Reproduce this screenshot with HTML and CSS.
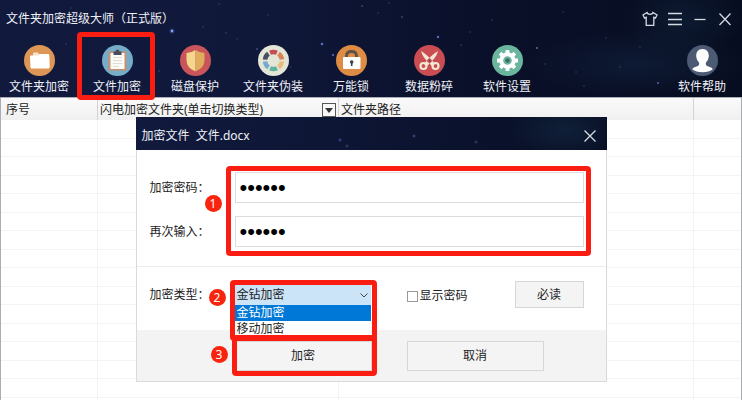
FILE: index.html
```html
<!DOCTYPE html>
<html lang="zh-CN">
  <head>
    <meta charset="utf-8">
    <meta name="viewport" content="width=device-width, initial-scale=1">
    <title>文件夹加密超级大师</title>
    <link rel="stylesheet" href="styles.css">
  </head>
  <body>
    <div class="window">
      <header class="header">
        <svg class="stars" aria-hidden="true">
          <g fill="#5b6fc0">
            <circle cx="172" cy="31" r="2.500" opacity=".4"/>
            <circle cx="172" cy="31" r="1.200" fill="#8d9cff"/>
            <circle cx="322" cy="44" r="1.300"/>
            <circle cx="333" cy="55" r="1.100"/>
            <circle cx="438" cy="37" r="1.200"/>
            <circle cx="537" cy="48" r="1"/>
            <circle cx="658" cy="83" r=".9"/>
            <circle cx="257" cy="49" r=".8"/>
            <circle cx="362" cy="6" r=".7"/>
            <circle cx="402" cy="17" r=".7"/>
          </g>
          <g fill="#384770">
            <circle cx="219" cy="4" r=".8"/>
            <circle cx="226" cy="33" r=".8"/>
            <circle cx="203" cy="27" r=".7"/>
            <circle cx="237" cy="39" r=".7"/>
            <circle cx="159" cy="71" r=".8"/>
            <circle cx="268" cy="15" r=".7"/>
            <circle cx="291" cy="67" r=".7"/>
            <circle cx="378" cy="13" r=".7"/>
            <circle cx="389" cy="3" r=".7"/>
            <circle cx="461" cy="45" r=".8"/>
            <circle cx="470" cy="32" r=".7"/>
            <circle cx="492" cy="20" r=".8"/>
            <circle cx="563" cy="12" r=".7"/>
            <circle cx="576" cy="72" r=".7"/>
            <circle cx="606" cy="38" r=".7"/>
            <circle cx="620" cy="67" r=".8"/>
            <circle cx="640" cy="47" r=".7"/>
            <circle cx="584" cy="86" r=".7"/>
            <circle cx="545" cy="64" r=".7"/>
            <circle cx="71" cy="8" r=".7"/>
            <circle cx="66" cy="44" r=".7"/>
          </g>
        </svg>

        <div class="titlebar">
          <h1 class="title">文件夹加密超级大师（正式版）</h1>
          <div class="controls">
            <button class="control" aria-label="换肤">
              <svg width="16" height="16" viewBox="0 0 16 16"><path d="M5 1.500 1 4l1.600 3.200 1.600-.8V14.300h7.600V6.400l1.600.8L15 4l-4-2.500C10.300 4 5.700 4 5 1.500z"/></svg>
            </button>
            <button class="control" aria-label="菜单">
              <svg width="16" height="16" viewBox="0 0 16 16"><path d="M1 2.500h14M1 8.500h14M1 13.500h14"/></svg>
            </button>
            <button class="control" aria-label="最小化">
              <svg width="16" height="16" viewBox="0 0 16 16"><path d="M2.500 8.500h11"/></svg>
            </button>
            <button class="control" aria-label="关闭">
              <svg width="16" height="16" viewBox="0 0 16 16"><path d="M2.500 2.500l11 11.500M13.500 2.500l-11 11.500"/></svg>
            </button>
          </div>
        </div>

        <nav class="toolbar">
          <button class="tool">
            <svg width="31" height="31" viewBox="0 0 31 31">
              <circle cx="15.500" cy="15.500" r="15.500" fill="#de9656"/>
              <path d="M9 9V8.500Q9 7.500 10 7.500h4l1 1.500h9q1.500 0 1.500 1.500V22H9z" fill="#f6e3cf"/>
              <path d="M6 11.500q0-1 1-1h7.500l1.500-1.500h8q1 0 1 1l.5 12.500q0 1-1 1h-17q-1 0-1-1z" fill="#fff"/>
            </svg>
            文件夹加密
          </button>
          <button class="tool marked">
            <svg width="31" height="31" viewBox="0 0 31 31">
              <circle cx="15.500" cy="15.500" r="15.500" fill="#76acc8"/>
              <rect x="6.500" y="6.500" width="18" height="19" rx="1.500" fill="#c98f6c"/>
              <rect x="8.500" y="8" width="14" height="16" fill="#fbfaf5"/>
              <path d="M11 12.500h9M11 15.500h9M11 18.500h9M11 21.500h6" stroke="#dcdcd8" fill="none"/>
              <path d="M11.500 6.500h2q0-2 2-2t2 2h2V10h-8z" fill="#454d5e"/>
            </svg>
            文件加密
          </button>
          <button class="tool">
            <svg width="31" height="31" viewBox="0 0 31 31">
              <circle cx="15.500" cy="15.500" r="15.500" fill="#c9555b"/>
              <path d="M15.500 5Q11 8 6.500 8v7q0 8 9 11.500z" fill="#f4d78d"/>
              <path d="M15.500 5Q20 8 24.500 8v7q0 8-9 11.500z" fill="#e0ac5d"/>
            </svg>
            磁盘保护
          </button>
          <button class="tool">
            <svg width="31" height="31" viewBox="0 0 31 31">
              <circle cx="15.500" cy="15.500" r="15.500" fill="#e3e5d6"/>
              <g fill="none" stroke-width="4.500" stroke-dasharray="7 60">
                <circle cx="15.500" cy="15.500" r="8.500" stroke="#c54d54" transform="rotate(-114 15.500 15.500)"/>
                <circle cx="15.500" cy="15.500" r="8.500" stroke="#dc8458" transform="rotate(-54 15.500 15.500)"/>
                <circle cx="15.500" cy="15.500" r="8.500" stroke="#e8bd7c" transform="rotate(6 15.500 15.500)"/>
                <circle cx="15.500" cy="15.500" r="8.500" stroke="#5fb39b" transform="rotate(66 15.500 15.500)"/>
                <circle cx="15.500" cy="15.500" r="8.500" stroke="#76a9d0" transform="rotate(126 15.500 15.500)"/>
                <circle cx="15.500" cy="15.500" r="8.500" stroke="#46505f" transform="rotate(186 15.500 15.500)"/>
              </g>
            </svg>
            文件夹伪装
          </button>
          <button class="tool">
            <svg width="31" height="31" viewBox="0 0 31 31">
              <circle cx="15.500" cy="15.500" r="15.500" fill="#de8c43"/>
              <path d="M10.500 13v-2q0-4.500 5-4.500t5 4.500v2" fill="none" stroke="#5f5048" stroke-width="2.800"/>
              <rect x="7" y="12" width="17.500" height="12" rx="1" fill="#fff"/>
              <circle cx="15.700" cy="17" r="1.800" fill="#39404e"/>
              <path d="M14.900 17h1.600v4h-1.600z" fill="#39404e"/>
            </svg>
            万能锁
          </button>
          <button class="tool">
            <svg width="31" height="31" viewBox="0 0 31 31">
              <circle cx="15.500" cy="15.500" r="15.500" fill="#c94d53"/>
              <path d="M7 6Q8.500 13 18.500 21.500l2.500-2.500Q14 10 7 6zM24 6Q22.500 13 12.500 21.500L10 19Q17 10 24 6z" fill="#f3e6d3"/>
              <g fill="none" stroke="#f3e6d3" stroke-width="2.200">
                <circle cx="9.500" cy="21" r="3"/>
                <circle cx="21.500" cy="21" r="3"/>
              </g>
              <circle cx="15.500" cy="15.800" r=".9" fill="#555"/>
            </svg>
            数据粉碎
          </button>
          <button class="tool">
            <svg width="31" height="31" viewBox="0 0 31 31">
              <circle cx="15.500" cy="15.500" r="15.500" fill="#69b59d"/>
              <circle cx="15.500" cy="15.500" r="8.200" fill="#fff"/>
              <g stroke="#fff" stroke-width="3.800">
                <path d="M15.500 5v21M5 15.500h21"/>
                <path d="M15.500 5v21M5 15.500h21" transform="rotate(45 15.500 15.500)"/>
              </g>
              <circle cx="15.500" cy="15.500" r="4.300" fill="#69b59d"/>
              <circle cx="15.500" cy="15.500" r="2.200" fill="#3e6a68"/>
            </svg>
            软件设置
          </button>
          <button class="tool help">
            <svg width="31" height="31" viewBox="0 0 31 31">
              <circle cx="15.500" cy="15.500" r="15.500" fill="#4c5a73"/>
              <path d="M15.500 4c4.300 0 6.300 3 6.300 6.800 0 3-1.300 5.200-3 6.900 0 2.300.4 3 2.600 3.700 2 .6 3.600 1.200 4.400 2.800-2.500 2-6 3-10.300 3s-7.800-1-10.300-3c.8-1.600 2.400-2.200 4.400-2.800 2.200-.7 2.600-1.400 2.600-3.700-1.700-1.700-3-3.900-3-6.900C9.200 7 11.200 4 15.500 4z" fill="#fff"/>
            </svg>
            软件帮助
          </button>
        </nav>
      </header>

      <main class="content">
        <table class="files">
          <colgroup>
            <col class="col-number">
            <col class="col-type">
            <col>
            <col class="col-end">
          </colgroup>
          <thead>
            <tr>
              <th>序号</th>
              <th>
                <div class="type-head">
                  闪电加密文件夹(单击切换类型)
                  <button class="type-toggle" aria-label="切换类型">
                    <svg width="8" height="5" viewBox="0 0 8 5"><path d="M0 0h8L4 5z"/></svg>
                  </button>
                </div>
              </th>
              <th>文件夹路径</th>
              <th></th>
            </tr>
          </thead>
          <tbody>
            <tr><td></td><td></td><td></td><td></td></tr>
            <tr><td></td><td></td><td></td><td></td></tr>
            <tr><td></td><td></td><td></td><td></td></tr>
            <tr><td></td><td></td><td></td><td></td></tr>
            <tr><td></td><td></td><td></td><td></td></tr>
            <tr><td></td><td></td><td></td><td></td></tr>
            <tr><td></td><td></td><td></td><td></td></tr>
            <tr><td></td><td></td><td></td><td></td></tr>
            <tr><td></td><td></td><td></td><td></td></tr>
            <tr><td></td><td></td><td></td><td></td></tr>
            <tr><td></td><td></td><td></td><td></td></tr>
            <tr><td></td><td></td><td></td><td></td></tr>
            <tr><td></td><td></td><td></td><td></td></tr>
            <tr><td></td><td></td><td></td><td></td></tr>
            <tr><td></td><td></td><td></td><td></td></tr>
            <tr><td></td><td></td><td></td><td></td></tr>
          </tbody>
        </table>

        <form class="dialog" role="dialog" aria-labelledby="dialog-title">
          <div class="dialog-head">
            <h2 class="title" id="dialog-title">加密文件&nbsp; 文件.docx</h2>
            <button type="button" class="control" aria-label="关闭">
              <svg width="16" height="16" viewBox="0 0 16 16"><path d="M2.500 2.500l11 11M13.500 2.500l-11 11"/></svg>
            </button>
          </div>

          <div class="passwords">
            <div class="labels">
              <label for="password">加密密码：</label>
              <label for="repeat">再次输入：</label>
            </div>
            <div class="fields marked">
              <input class="field" type="password" id="password" value="123456">
              <input class="field" type="password" id="repeat" value="123456">
              <span class="badge">1</span>
            </div>
          </div>

          <div class="options">
            <label class="option-label" for="type">加密类型：</label>
            <div class="picker marked">
              <select class="select" id="type">
                <option selected>金钻加密</option>
                <option>移动加密</option>
              </select>
              <svg class="arrow" width="8" height="5" viewBox="0 0 8 5"><path d="M.5.5 4 4 7.500.5"/></svg>
              <ul class="list">
                <li class="item active">金钻加密</li>
                <li class="item">移动加密</li>
              </ul>
              <span class="badge">2</span>
            </div>
            <div class="show">
              <input class="check" type="checkbox" id="show">
              <label for="show">显示密码</label>
            </div>
            <button type="button" class="button small">必读</button>
          </div>

          <div class="dialog-foot">
            <div class="submit marked">
              <button type="button" class="button">加密</button>
              <span class="badge">3</span>
            </div>
            <button type="button" class="button">取消</button>
          </div>
        </form>
      </main>
    </div>
  </body>
</html>
```

FILE: styles.css
```css
* {
  box-sizing: border-box;
}

body {
  margin: 0;
  overflow: hidden;
}

body,
button,
input,
select {
  font-family: "Noto Sans", "Noto Sans CJK SC", sans-serif;
  font-size: 12px;
  line-height: 16px;
  color: #222;
}

button {
  padding: 0;
  border: 0;
  background: none;
}

.window {
  height: 100vh;
  overflow: hidden;
  background: #fff;
}

/* header */
.header {
  position: relative;
  background:
    radial-gradient(ellipse 110px 34px at 86% 66%, rgba(20, 42, 72, 0.45), transparent),
    radial-gradient(ellipse 60px 40px at 92% 20%, rgba(18, 42, 66, 0.45), transparent),
    linear-gradient(90deg, #111a3d 0%, #10183a 35%, #0a1029 65%, #070d20 100%);
}

.stars {
  position: absolute;
  top: 0;
  left: 0;
  width: 100%;
  height: 100%;
}

.titlebar {
  position: relative;
  display: flex;
  align-items: center;
  justify-content: space-between;
  height: 38px;
  padding: 0 9px 0 6px;
}

.title {
  margin: 0;
  font-size: 12px;
  font-weight: normal;
  color: #f0f2f8;
}

.controls {
  display: flex;
  gap: 9px;
}

.control {
  width: 16px;
  height: 16px;
}

.control svg {
  display: block;
  fill: none;
  stroke: #d5dbe2;
  stroke-width: 1.3;
}

.toolbar {
  display: flex;
  padding: 7px 1px 2px 0;
}

.tool {
  position: relative;
  display: flex;
  flex-direction: column;
  align-items: center;
  gap: 3px;
  width: 78px;
  color: #eef0f6;
}

.help {
  margin-left: auto;
}

/* red frames and numbers of the steps */
.marked {
  position: relative;
}

.marked::after {
  content: "";
  position: absolute;
  z-index: 3;
  border: 5px solid #fb1d12;
  border-radius: 4px;
  pointer-events: none;
}

.tool.marked::after {
  inset: -13px 1px -5px -1px;
}

.fields.marked::after {
  inset: -6px -7px -9px -9px;
}

.picker.marked::after {
  inset: -5px -6px -36px -5px;
}

.submit.marked::after {
  inset: -6px -5px -5px -3px;
}

.badge {
  position: absolute;
  z-index: 3;
  width: 17px;
  height: 17px;
  border-radius: 50%;
  background: #f8240e;
  color: #fff;
  line-height: 17px;
  text-align: center;
}

.fields .badge {
  top: 23px;
  left: -30px;
}

.picker .badge {
  top: 4px;
  left: -26px;
}

.submit .badge {
  top: 5px;
  left: -24px;
}

/* file list */
.content {
  position: relative;
  border: 1px solid #a9adb5;
  border-bottom: 0;
}

.files {
  width: 100%;
  table-layout: fixed;
  border-collapse: separate;
  border-spacing: 0;
}

.col-number {
  width: 97px;
}

.col-type {
  width: 241px;
}

.col-end {
  width: 47px;
}

.files th {
  height: 22px;
  padding: 2px 2px 0;
  border-right: 1px solid #d4d4d4;
  background: linear-gradient(#fafafa, #f0f0f0);
  font-weight: normal;
  text-align: left;
}

.files th:first-child {
  padding-left: 5px;
}

.files td {
  height: 18px;
  padding: 0;
  border-right: 1px solid #f3f3f3;
  border-bottom: 1px solid #f3f3f3;
}

.files tr:nth-child(odd) td {
  height: 19px;
}

.files th:last-child,
.files td:last-child {
  border-right: 0;
}

.type-head {
  display: flex;
  align-items: center;
  justify-content: space-between;
}

.type-toggle {
  display: flex;
  align-items: center;
  justify-content: center;
  width: 14px;
  height: 14px;
  border: 1px solid #555;
  background: #f8f8f8;
}

.type-toggle svg {
  fill: #333;
}

/* dialog */
.dialog {
  position: absolute;
  top: 19px;
  left: 0;
  right: 0;
  z-index: 2;
  width: 471px;
  margin: 0 auto;
  border: 1px solid #d9dade;
  border-top: 0;
  background: #fff;
}

.dialog-head {
  display: flex;
  align-items: center;
  justify-content: space-between;
  height: 33px;
  margin: 0 -1px;
  padding: 4px 9px 0 6px;
  background:
    radial-gradient(circle 2px at 204px 23px, #4258a0, transparent),
    radial-gradient(circle 2px at 211px 29px, #33477f, transparent),
    radial-gradient(circle 2px at 278px 19px, #4258a0, transparent),
    radial-gradient(circle 2px at 340px 25px, #33477f, transparent),
    radial-gradient(ellipse 60px 30px at 91% 40%, #0f2038, transparent),
    linear-gradient(90deg, #111a3d 0%, #0e1636 40%, #080e24 100%);
}

.passwords {
  display: flex;
  padding: 22px 22px 19px 13px;
  border-bottom: 1px solid #ececec;
}

.labels {
  display: grid;
  gap: 13px;
  align-items: center;
  width: 85px;
}

.fields {
  flex: 1;
  display: grid;
  gap: 13px;
}

.field {
  width: 100%;
  height: 31px;
  padding: 0 4px;
  border: 1px solid #dcdcdc;
  font-family: "Liberation Sans", sans-serif;
  font-size: 22px;
  line-height: 29px;
  color: #000;
}

.options {
  display: flex;
  align-items: center;
  padding: 14px 22px 22px 13px;
}

.option-label {
  width: 85px;
}

.picker {
  width: 136px;
}

.select {
  display: block;
  width: 100%;
  height: 20px;
  padding: 0 2px;
  border: 0;
  border-radius: 0;
  appearance: none;
  background: #cce4f7;
}

.arrow {
  position: absolute;
  top: 8px;
  right: 3px;
  fill: none;
  stroke: #444;
}

.list {
  position: absolute;
  top: 20px;
  left: 0;
  right: 0;
  z-index: 2;
  margin: 0;
  padding: 0;
  background: #fff;
  list-style: none;
}

.item {
  padding: 0 2px;
}

.active {
  background: #0078d7;
  color: #fff;
}

.show {
  display: flex;
  align-items: center;
  gap: 2px;
  margin-left: 36px;
  padding-top: 3px;
}

.check {
  width: 11px;
  height: 11px;
  margin: 0;
  border: 1px solid #999;
  appearance: none;
  background: #fff;
}

.button {
  width: 137px;
  height: 30px;
  border: 1px solid #d6d6d6;
  background: #f4f4f4;
}

.small {
  width: 69px;
  height: 27px;
  margin-left: auto;
}

.dialog-foot {
  display: flex;
  gap: 35px;
  padding: 11px 0 10px 98px;
  background: #f3f3f3;
}
```
